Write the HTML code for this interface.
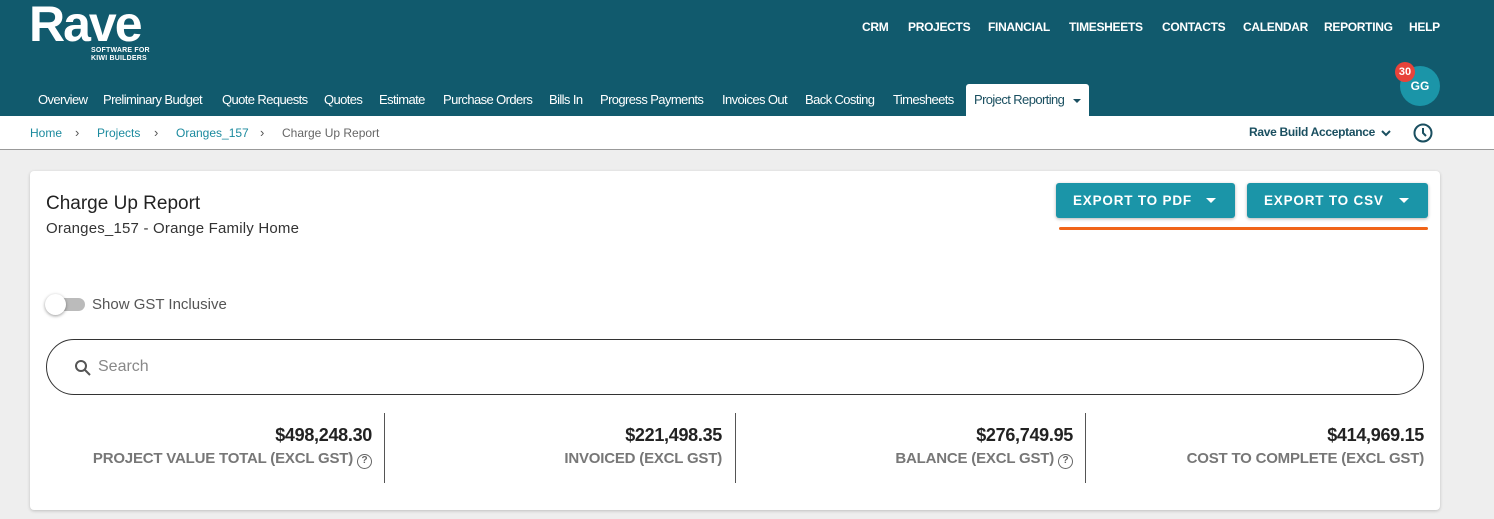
<!DOCTYPE html>
<html><head><style>
*{margin:0;padding:0;box-sizing:border-box}
body{width:1494px;height:519px;overflow:hidden;background:#eeeeee;font-family:"Liberation Sans",Arial,sans-serif;position:relative}
.hdr{position:absolute;left:0;top:0;width:1494px;height:116px;background:#115a6d}
.logo{position:absolute;left:29px;top:-5px;color:#fff;font-size:50px;font-weight:bold;letter-spacing:-2px}
.tag{position:absolute;left:91px;top:47px;color:#fff;font-size:7px;font-weight:bold;line-height:8px;letter-spacing:.2px}
.top{position:absolute;top:20px;color:#fff;font-size:12px;font-weight:bold;letter-spacing:-0.3px}
.tab{position:absolute;top:92px;color:#fff;font-size:13px;letter-spacing:-0.6px}
.act{position:absolute;left:966px;top:84px;width:123px;height:32px;background:#fff;border-radius:3px 3px 0 0;color:#1a4f60;font-size:13px;padding:8px 0 0 8px;letter-spacing:-0.6px}
.av{position:absolute;left:1400px;top:66px;width:40px;height:40px;border-radius:50%;background:#1b95a8;color:#fff;font-weight:bold;font-size:12px;text-align:center;line-height:40px}
.bd{position:absolute;left:1395px;top:62px;width:20px;height:20px;border-radius:50%;background:#e8433a;color:#fff;font-weight:bold;font-size:11px;text-align:center;line-height:20px}
.bc{position:absolute;left:0;top:116px;width:1494px;height:34px;background:#fff;border-bottom:1px solid #999;font-size:12px}
.card{position:absolute;left:30px;top:171px;width:1410px;height:339px;background:#fff;border-radius:4px;box-shadow:0 1px 3px rgba(0,0,0,.2)}
.btn{position:absolute;top:12px;height:35px;background:#1b95a8;border-radius:3px;color:#fff;font-weight:bold;font-size:13.5px;letter-spacing:.8px;line-height:35px;padding-left:17px;box-shadow:0 1px 3px rgba(0,0,0,.3)}
.stat{position:absolute;top:254px;text-align:right;width:326px}
.v{font-size:18px;color:#222;font-weight:bold;letter-spacing:-0.3px}
.l{font-size:15px;color:#777;margin-top:4px;font-weight:bold;letter-spacing:-0.2px}
.q{display:inline-block;width:15px;height:15px;border:1.5px solid #666;border-radius:50%;font-size:10px;line-height:12px;text-align:center;color:#666;vertical-align:0}
.sep{position:absolute;top:242px;width:1px;height:70px;background:#555}
.caret{position:absolute;top:15px;width:0;height:0;border-left:5px solid transparent;border-right:5px solid transparent;border-top:5px solid #fff}
.cr{position:absolute;top:9px;color:#555;font-size:13px}
</style></head><body>
<div class="hdr">
<div class="logo">Rave</div>
<div class="tag">SOFTWARE FOR<br>KIWI BUILDERS</div>
<span class="top" style="left:862px">CRM</span>
<span class="top" style="left:908px">PROJECTS</span>
<span class="top" style="left:988px">FINANCIAL</span>
<span class="top" style="left:1069px">TIMESHEETS</span>
<span class="top" style="left:1162px">CONTACTS</span>
<span class="top" style="left:1243px">CALENDAR</span>
<span class="top" style="left:1324px">REPORTING</span>
<span class="top" style="left:1409px">HELP</span>
<span class="tab" style="left:38px">Overview</span>
<span class="tab" style="left:103px">Preliminary Budget</span>
<span class="tab" style="left:222px">Quote Requests</span>
<span class="tab" style="left:324px">Quotes</span>
<span class="tab" style="left:379px">Estimate</span>
<span class="tab" style="left:443px">Purchase Orders</span>
<span class="tab" style="left:549px">Bills In</span>
<span class="tab" style="left:600px">Progress Payments</span>
<span class="tab" style="left:722px">Invoices Out</span>
<span class="tab" style="left:805px">Back Costing</span>
<span class="tab" style="left:893px">Timesheets</span>
<div class="act">Project Reporting<span class="caret" style="border-top-color:#1a4f60;left:107px;border-left-width:4px;border-right-width:4px;border-top-width:4px"></span></div>
<div class="av">GG</div><div class="bd">30</div>
</div>
<div class="bc">
<span style="position:absolute;left:30px;top:10px;color:#1b8a9e">Home</span>
<span class="cr" style="left:75px">›</span>
<span style="position:absolute;left:97px;top:10px;color:#1b8a9e">Projects</span>
<span class="cr" style="left:154px">›</span>
<span style="position:absolute;left:176px;top:10px;color:#1b8a9e">Oranges_157</span>
<span class="cr" style="left:260px">›</span>
<span style="position:absolute;left:282px;top:10px;color:#666">Charge Up Report</span>
<span style="position:absolute;left:1249px;top:9px;color:#1a4f60;font-weight:bold;letter-spacing:-0.3px">Rave Build Acceptance</span>
<svg style="position:absolute;left:1380px;top:12px" width="12" height="10"><path d="M2 3l4 4 4-4" stroke="#1a4f60" stroke-width="2" fill="none"/></svg>
<svg style="position:absolute;left:1412px;top:6px" width="22" height="22"><circle cx="11" cy="11" r="8.5" stroke="#1a4f60" stroke-width="2" fill="none"/><path d="M11 6v5l3 3" stroke="#1a4f60" stroke-width="2" fill="none"/></svg>
</div>
<div class="card">
<div style="position:absolute;left:16px;top:22px;font-size:19px;color:#222">Charge Up Report</div>
<div style="position:absolute;left:16px;top:49px;font-size:15px;color:#333;letter-spacing:.2px">Oranges_157 - Orange Family Home</div>
<div class="btn" style="left:1026px;width:179px">EXPORT TO PDF<span class="caret" style="left:150px"></span></div>
<div class="btn" style="left:1217px;width:181px">EXPORT TO CSV<span class="caret" style="left:152px"></span></div>
<div style="position:absolute;left:1029px;top:56px;width:369px;height:3px;background:#f06418;border-radius:2px"></div>
<div style="position:absolute;left:18px;top:127px;width:37px;height:13px;border-radius:7px;background:#bbb"></div>
<div style="position:absolute;left:15px;top:123px;width:21px;height:21px;border-radius:50%;background:#fff;box-shadow:0 1px 3px rgba(0,0,0,.4)"></div>
<div style="position:absolute;left:62px;top:125px;font-size:15px;color:#555">Show GST Inclusive</div>
<div style="position:absolute;left:16px;top:168px;width:1378px;height:56px;border:1px solid #333;border-radius:28px"></div>
<svg style="position:absolute;left:44px;top:188px" width="18" height="18"><circle cx="7" cy="7" r="5" stroke="#555" stroke-width="2" fill="none"/><path d="M11 11l5 5" stroke="#555" stroke-width="2"/></svg>
<div style="position:absolute;left:68px;top:187px;font-size:16px;color:#888">Search</div>
<div class="stat" style="left:16px"><div class="v">$498,248.30</div><div class="l">PROJECT VALUE TOTAL (EXCL GST) <span class="q">?</span></div></div>
<div class="sep" style="left:354px"></div>
<div class="stat" style="left:366px"><div class="v">$221,498.35</div><div class="l">INVOICED (EXCL GST)</div></div>
<div class="sep" style="left:705px"></div>
<div class="stat" style="left:717px"><div class="v">$276,749.95</div><div class="l">BALANCE (EXCL GST) <span class="q">?</span></div></div>
<div class="sep" style="left:1055px"></div>
<div class="stat" style="left:1068px"><div class="v">$414,969.15</div><div class="l">COST TO COMPLETE (EXCL GST)</div></div>
</div>
</body></html>
